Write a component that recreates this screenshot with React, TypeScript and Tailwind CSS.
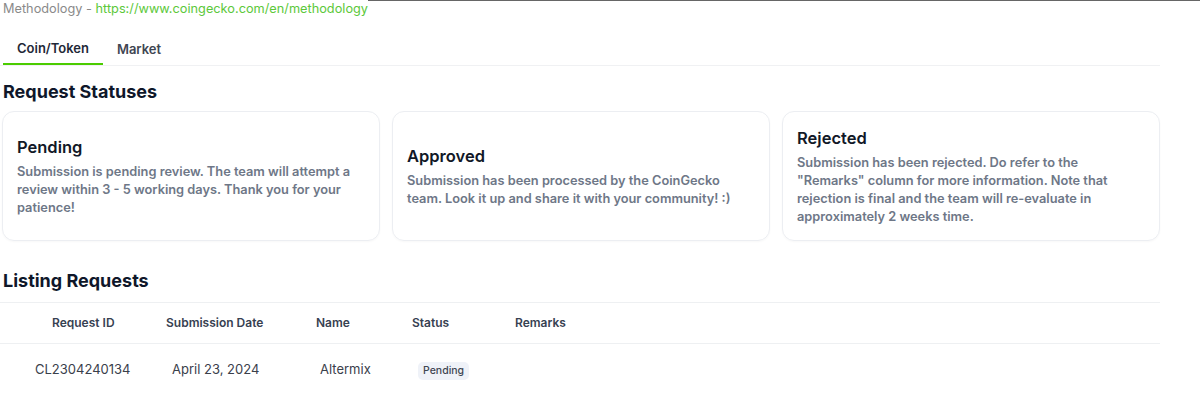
import React from "react";

const cards = [
  {
    title: "Pending",
    desc: "Submission is pending review. The team will attempt a review within 3 - 5 working days. Thank you for your patience!",
  },
  {
    title: "Approved",
    desc: "Submission has been processed by the CoinGecko team. Look it up and share it with your community! :)",
  },
  {
    title: "Rejected",
    desc: 'Submission has been rejected. Do refer to the "Remarks" column for more information. Note that rejection is final and the team will re-evaluate in approximately 2 weeks time.',
  },
];

export default function App() {
  return (
    <div
      className="w-[1200px] h-[401px] bg-white overflow-hidden"
      style={{ fontFamily: "Inter, 'Noto Sans', sans-serif" }}
    >
      <div className="flex items-start">
        <div className="pl-[3px] text-[12.75px] leading-[17px] text-[#8a8a8a] whitespace-nowrap">
          Methodology - <span className="text-[#5cc83a]">https://www.coingecko.com/en/methodology</span>
        </div>
        <div className="flex-1 border-t border-[#666]" />
      </div>

      <div className="w-[1160px]">
        <div className="mt-[17px] flex border-b border-[#f0f1f3] pl-[3px]">
          <div className="w-[100px] h-[31px] flex items-center justify-center border-b-2 border-[#4bcc00] text-[13px] font-semibold text-[#1f2937] -mb-px">
            Coin/Token
          </div>
          <div className="w-[72px] h-[31px] flex items-center justify-center text-[13px] font-semibold text-[#3f4652]">
            Market
          </div>
        </div>

        <h2 className="mt-[15px] pl-[3px] text-[18px] leading-[22px] font-bold text-[#0f172a]">Request Statuses</h2>

        <div className="mt-[8px] grid grid-cols-3 gap-[12px] pl-[2px]">
          {cards.map((c) => (
            <div
              key={c.title}
              className="h-[130px] rounded-[12px] border border-[#eceef2] shadow-[0_1px_2px_rgba(0,0,0,0.03)] px-[14px] flex flex-col justify-center"
            >
              <div className="text-[16.5px] leading-[22px] font-semibold text-[#111827]">{c.title}</div>
              <div className="mt-[5px] text-[12.8px] leading-[18px] font-semibold text-[#6e7787]">{c.desc}</div>
            </div>
          ))}
        </div>

        <h2 className="mt-[29px] pl-[3px] text-[18px] leading-[22px] font-bold text-[#0f172a]">Listing Requests</h2>

        <div className="mt-[10px] border-t border-[#eef0f2]">
          <div className="h-[41px] flex items-center pl-[52px] border-b border-[#eef0f2] text-[12px] font-semibold text-[#374151]">
            <div className="w-[114px]">Request ID</div>
            <div className="w-[150px]">Submission Date</div>
            <div className="w-[96px]">Name</div>
            <div className="w-[103px]">Status</div>
            <div>Remarks</div>
          </div>
          <div className="h-[52px] flex items-center pl-[35px] text-[13px] text-[#3a404b]">
            <div className="w-[137px]">CL2304240134</div>
            <div className="w-[148px]">April 23, 2024</div>
            <div className="w-[98px]">Altermix</div>
            <div>
              <span className="inline-block rounded-[5px] bg-[#eff2f8] px-[5px] py-[2px] text-[10.5px] leading-[14px] font-medium text-[#3f4652]">
                Pending
              </span>
            </div>
          </div>
        </div>
      </div>
    </div>
  );
}
